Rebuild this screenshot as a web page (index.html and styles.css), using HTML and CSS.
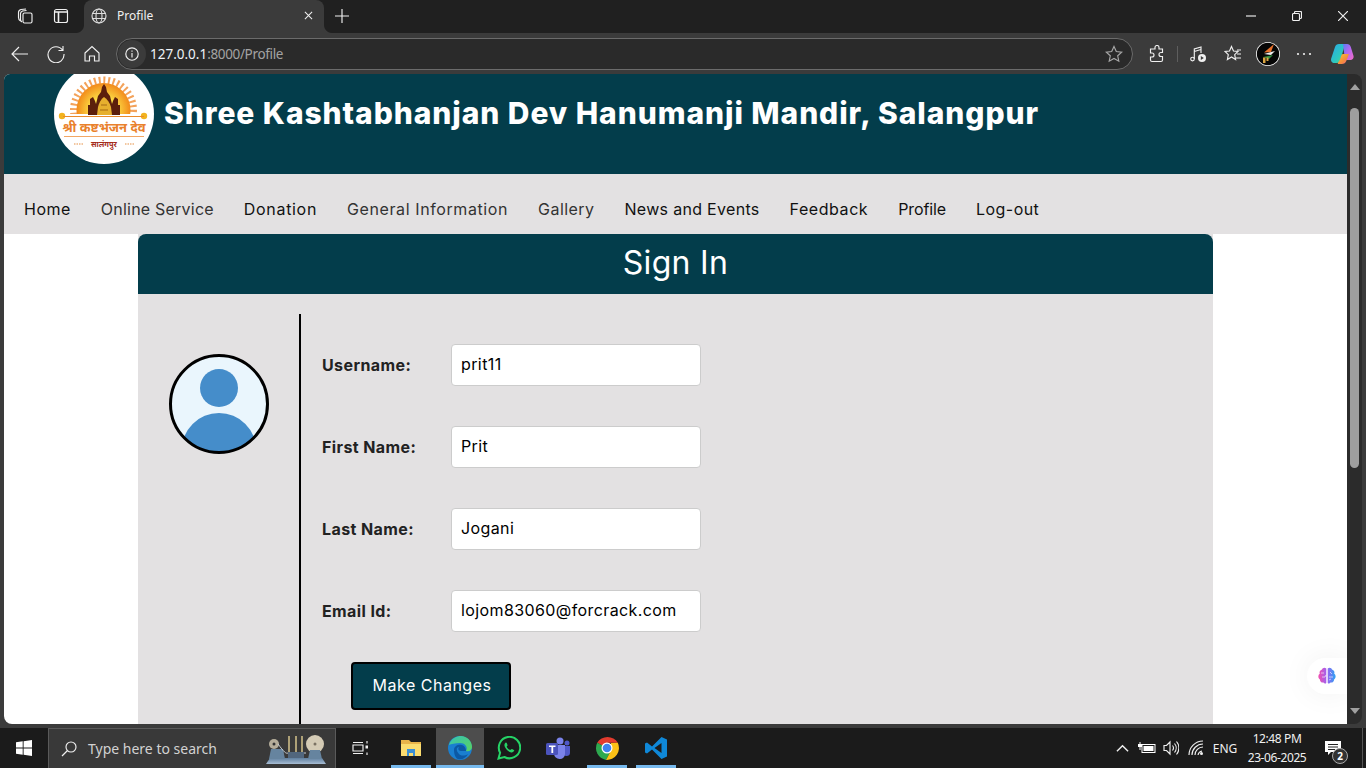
FILE: index.html
```html
<!DOCTYPE html>
<html lang="en">
<head>
<meta charset="utf-8">
<title>Profile</title>
<link rel="stylesheet" href="styles.css">
</head>
<body>
<div class="window">
  <div class="tabstrip">
    <div class="tbtn"><svg class="ic" viewBox="0 0 16 16"><path d="M1.500 4.500c0-1 .8-2.500 2.500-3l5-.5M1.500 4.500v5c0 1.500 1 3 2 3.500M3.500 5.500c0-1 1-2 2-2.500l4-.5M3.500 5.500v6c0 1 .7 2 1.500 2.500"/><rect x="6" y="5" width="9" height="10" rx="1.500"/></svg></div>
    <div class="tbtn tbtn-2"><svg class="ic" viewBox="0 0 16 16"><rect x="1.500" y="1.500" width="13" height="13" rx="2"/><path class="thick" d="M1.500 4h13M5.500 4v10.500"/></svg></div>
    <div class="tab">
      <svg class="ic globe" viewBox="0 0 16 16"><circle cx="8" cy="8" r="7"/><ellipse cx="8" cy="8" rx="3" ry="7"/><path d="M1.500 5.500h13M1.500 10.500h13"/></svg>
      <span class="tab-title">Profile</span>
      <svg class="ic tab-x" viewBox="0 0 10 10"><path d="M1 1l8 8M9 1l-8 8"/></svg>
    </div>
    <div class="tbtn"><svg class="ic plus" viewBox="0 0 14 14"><path d="M7 0v14M0 7h14"/></svg></div>
    <div class="winctl">
      <div class="wbtn"><svg class="ic w10" viewBox="0 0 10 10"><path d="M0 5h10"/></svg></div>
      <div class="wbtn"><svg class="ic w10" viewBox="0 0 10 10"><rect x=".5" y="2.500" width="7" height="7" rx="1"/><path d="M2.500 2.500V1.500a1 1 0 0 1 1-1h5a1 1 0 0 1 1 1v5a1 1 0 0 1-1 1h-1"/></svg></div>
      <div class="wbtn"><svg class="ic w10" viewBox="0 0 10 10"><path d="M0 0l10 10M10 0L0 10"/></svg></div>
    </div>
  </div>

  <div class="toolbar">
    <div class="tbtn"><svg class="ic i18" viewBox="0 0 18 18"><path d="M17 9H1.500M8 2L1 9l7 7"/></svg></div>
    <div class="tbtn"><svg class="ic i18" viewBox="0 0 18 18"><path d="M15.500 5A8 8 0 1 0 17 9M16 1v4.500h-4.500"/></svg></div>
    <div class="tbtn"><svg class="ic i18" viewBox="0 0 18 18"><path d="M2 8l7-6.500L16 8v8h-4.500v-5h-5v5H2z"/></svg></div>
    <div class="address">
      <div class="info"><svg class="ic i14" viewBox="0 0 14 14"><circle cx="7" cy="7" r="6.200"/><path d="M7 6v4.500M7 3.500v1.300"/></svg></div>
      <span class="host">127.0.0.1</span><span class="path">:8000/Profile</span>
      <svg class="ic star" viewBox="0 0 18 18"><path d="M9 1.500l2.300 5 5.400.6-4 3.700 1.100 5.400L9 13.500l-4.800 2.700 1.100-5.400-4-3.700 5.400-.6z"/></svg>
    </div>
    <div class="tbtn tb-ext"><svg class="ic i18" viewBox="0 0 18 18"><path d="M7 2.500a2 2 0 0 1 4 0V4h3.500v3.500H13a2 2 0 0 0 0 4h1.500V15a1.500 1.500 0 0 1-1.500 1.500H4A1.500 1.500 0 0 1 2.500 15v-3H4a2 2 0 0 0 0-4H2.500V4H7z"/></svg></div>
    <div class="sep"></div>
    <div class="tbtn tb-music"><svg class="ic i18" viewBox="0 0 18 18"><circle cx="3.500" cy="14" r="1.800"/><path d="M5.300 14V4l6.700-2v6M5.300 6.500l6.700-2"/><circle class="solid" cx="13" cy="13" r="4"/><path class="cut" d="M11.800 11v4l3-2z"/></svg></div>
    <div class="tbtn tb-fav"><svg class="ic i18" viewBox="0 0 18 18"><path d="M7.500 1.500l2 4.500 4.500.5-3.300 3.200.9 4.800L7.500 12l-4.100 2.500.9-4.800L1 6.500 5.500 6zM13 5h4M13 9h4M12 13h5"/></svg></div>
    <div class="tbtn tb-av"><svg class="avatar-ic" viewBox="0 0 24 24"><circle cx="12" cy="12" r="12" fill="#fff"/><circle cx="12" cy="12" r="11.200" fill="#060606"/><path d="M8 10.500L18 2l-3 8z" fill="#e8702a"/><path d="M8 12l11-3-4 4z" fill="#eee"/><path d="M7 15l10-2-4 4z" fill="#2f8f3b"/><path d="M7 15.500h2.500V21H7zM10.500 15.500h2V19h-2z" fill="#d9a441"/></svg></div>
    <div class="tbtn tb-av"><svg class="ic i18 dots" viewBox="0 0 18 18"><circle cx="3" cy="9" r="1.100"/><circle cx="9" cy="9" r="1.100"/><circle cx="15" cy="9" r="1.100"/></svg></div>
    <div class="tbtn tb-cop"><svg class="copilot" viewBox="0 0 24 24"><defs><linearGradient id="cpa" x1="0" y1="0" x2="1" y2="1"><stop offset="0" stop-color="#2aa7e8"/><stop offset=".6" stop-color="#2dc8c0"/><stop offset="1" stop-color="#5fd86f"/></linearGradient><linearGradient id="cpb" x1="0" y1="0" x2="1" y2="1"><stop offset="0" stop-color="#5a7cf5"/><stop offset=".5" stop-color="#b868f0"/><stop offset="1" stop-color="#f26cc4"/></linearGradient><linearGradient id="cpc" x1="0" y1="0" x2="1" y2="1"><stop offset="0" stop-color="#f7c53a"/><stop offset=".6" stop-color="#f58a3c"/><stop offset="1" stop-color="#ef5fa0"/></linearGradient></defs><path d="M9 2h6l-4.500 16c-.6 2-1.800 3-3.500 3H4.500C2 21 .5 19 1.200 16.500L5 5c.6-2 2-3 4-3z" fill="url(#cpa)"/><path d="M13 2h4c2 0 3.200 1 3.800 3l2.600 8.500c.8 2.500-.6 4.500-3 4.500H15z" fill="url(#cpb)"/><path d="M9 22c-1 0-1.500-.5-1-1.500 1.500-1.500 2.500-4 3-6 .5-2 1-2.500 3-2.500h5c-1 2-1.500 5-3 7.500-1 1.800-2.500 2.500-4 2.500z" fill="url(#cpc)"/></svg></div>
  </div>

  <div class="content-row">
    <div class="viewport">
      <header class="site-header">
        <svg class="logo" viewBox="0 0 100 100">
          <defs>
            <clipPath id="sunclip"><rect x="0" y="0" width="100" height="50"/></clipPath>
            <radialGradient id="sung"><stop offset=".45" stop-color="#fde047"/><stop offset="1" stop-color="#f28a1a"/></radialGradient>
          </defs>
          <circle cx="50" cy="50" r="50" fill="#fff"/>
          <g clip-path="url(#sunclip)">
            <circle cx="49.500" cy="46" r="30" fill="none" stroke="#f3a25a" stroke-width="7" stroke-dasharray="2 2.700"/>
            <circle cx="49.500" cy="46" r="27" fill="url(#sung)"/>
          </g>
          <path d="M34 51v-10h2v-6l3-2 2 4 1 3 2-8 3-4 1-5 2-3 2 3 1 5 3 4 2 8 1-3 2-4 3 2v6h2v10z" fill="#5c1f0c"/>
          <path d="M50 33c3 2 6 6 7 10l1 8H43l1-8c1-4 3-8 6-10z" fill="#e6b02e"/>
          <path d="M47 41h6M46 46h8" stroke="#a56a14" stroke-width="1"/>
          <circle cx="8" cy="52" r="3.200" fill="#f2b31f"/><circle cx="90" cy="52" r="3.200" fill="#f2b31f"/>
          <path d="M9 52.500h81" stroke="#ea8a2a" stroke-width="1"/>
          <text class="logo-main" x="50" y="68" text-anchor="middle">श्री कष्टभंजन देव</text>
          <path d="M10 72.500h80" stroke="#f2a765" stroke-width="1.200"/>
          <path d="M20 80h9M71 80h9" stroke="#f2c7a0" stroke-width="2" stroke-dasharray="1.500 1"/>
          <text class="logo-sub" x="50" y="83" text-anchor="middle">सालंगपुर</text>
        </svg>
        <h1 class="site-title">Shree Kashtabhanjan Dev Hanumanji Mandir, Salangpur</h1>
      </header>
      <nav class="site-nav">
        <a>Home</a><a class="soft">Online Service</a><a>Donation</a><a class="soft">General Information</a><a class="soft">Gallery</a><a>News and Events</a><a>Feedback</a><a>Profile</a><a>Log-out</a>
      </nav>
      <main class="card">
        <h2 class="card-head">Sign In</h2>
        <div class="card-body">
          <div class="side">
            <svg class="avatar" viewBox="0 0 100 100">
              <defs><clipPath id="avclip"><circle cx="50" cy="50" r="48"/></clipPath></defs>
              <circle cx="50" cy="50" r="48" fill="#eaf6fd"/>
              <circle cx="50" cy="34" r="19" fill="#458dca"/>
              <circle cx="50" cy="96.300" r="37.300" fill="#458dca" clip-path="url(#avclip)"/>
              <circle cx="50" cy="50" r="48.500" fill="none" stroke="#000" stroke-width="3"/>
            </svg>
          </div>
          <form class="form">
            <div class="row"><label class="lbl">Username:</label><input class="field" value="prit11"></div>
            <div class="row"><label class="lbl">First Name:</label><input class="field" value="Prit"></div>
            <div class="row"><label class="lbl">Last Name:</label><input class="field" value="Jogani"></div>
            <div class="row"><label class="lbl">Email Id:</label><input class="field" value="lojom83060@forcrack.com"></div>
            <button class="submit" type="button">Make Changes</button>
          </form>
        </div>
      </main>
      <div class="float-pill">
        <svg class="brain" viewBox="0 0 20 20"><defs><linearGradient id="brg" x1="0" y1="0" x2="1" y2="0"><stop offset="0" stop-color="#f24fb0"/><stop offset=".5" stop-color="#9a62f2"/><stop offset="1" stop-color="#2aa4f2"/></linearGradient></defs><path d="M9.300 2.500C7.500 1 5.500 2 5 3.500 3 4 2 6 2.800 7.500 1 9 .8 12 2.800 13.200 2.800 15.500 4.800 17 6.500 16.500c.8 1.500 2.500 1.300 2.800.2zM10.700 2.500C12.500 1 14.500 2 15 3.500c2 .5 3 2.500 2.200 4 1.800 1.500 2 4.500 0 5.700 0 2.300-2 3.800-3.700 3.300-.8 1.500-2.500 1.300-2.800.2z" fill="url(#brg)"/><path d="M4 7h3M5 11h3l1-2M13 6l2 2M12 11h4M12 14l2-1" stroke="#fff" stroke-width=".6" fill="none"/></svg>
      </div>
    </div>
    <div class="scrollbar">
      <div class="arrow-up"></div>
      <div class="thumb"></div>
      <div class="arrow-down"></div>
    </div>
  </div>

  <div class="taskbar">
    <div class="start"><svg class="win" viewBox="0 0 16 16"><path d="M0 2.200L6.700 1.300V7.500H0zM7.600 1.200L16 0V7.500H7.600zM0 8.500H6.700V14.700L0 13.800zM7.600 8.500H16V16L7.600 14.800z"/></svg></div>
    <div class="search">
      <svg class="ic mag" viewBox="0 0 16 16"><circle cx="10" cy="6" r="5"/><path d="M6.500 9.500L1 15"/></svg>
      <span class="search-text">Type here to search</span>
      <svg class="machine" viewBox="0 0 60 32"><defs><linearGradient id="mbase" x1="0" y1="0" x2="0" y2="1"><stop offset="0" stop-color="#5f7f9f"/><stop offset="1" stop-color="#a8bdd3"/></linearGradient></defs><path d="M0 31l4-6h52l4 6z" fill="url(#mbase)"/><path d="M5 16h12l2 10H3z" fill="#66849f"/><circle cx="8" cy="11" r="5" fill="#b5ad9a"/><circle cx="8" cy="11" r="1.500" fill="#333"/><path d="M12 11c6 8 8 10 10 9h18" stroke="#c7cdd3" fill="none"/><path d="M23 3v16M30 3v16M36 3v16" stroke="#d5c48c" stroke-width="1.500"/><rect x="22" y="19" width="16" height="6" fill="#51667d"/><circle cx="49" cy="11" r="9" fill="#d4cbb5"/><circle cx="49" cy="11" r="1.500" fill="#7a7262"/><path d="M44 17h10l2 9H42z" fill="#66849f"/></svg>
    </div>
    <div class="tile"><svg class="ic taskview" viewBox="0 0 16 16"><path d="M1 2.500h10M1 13.500h10M1 5h10v6H1zM15 1v2.500M15 12.500V15"/><rect class="solid" x="13.500" y="5.500" width="3" height="3"/></svg></div>
    <div class="apps">
      <div class="tile app run-40">
        <svg class="app-ic" viewBox="0 0 24 24"><path d="M2 4h8l2 2h10v14H2z" fill="#e9b44a"/><path d="M2 8h20v12H2z" fill="#fbdc6f"/><path d="M8 13h8v7h-2v-3h-4v3H8z" fill="#3b8fd4"/></svg>
      </div>
      <div class="tile app active">
        <svg class="app-ic" viewBox="0 0 24 24"><defs><linearGradient id="edg" x1="0" y1="0" x2="1" y2="1"><stop offset="0" stop-color="#36c2b4"/><stop offset="1" stop-color="#5ad35f"/></linearGradient></defs><circle cx="12" cy="12" r="12" fill="#1a7fd0"/><path d="M1 9C3 2 9 0 13 0c6 0 11 5 11 11 0 3-3 5-6 4 2-3 0-8-6-8-5 0-9 1-11 2z" fill="url(#edg)"/><path d="M6 14c0-4 4-6 8-5 3 1 4 4 4 6h-5c-3 0-3-3-2-4-3 0-3 4 0 7 2 2 6 2 9 0-2 4-6 6-10 5-3-1-4-6-4-9z" fill="#0c59a4"/></svg>
      </div>
      <div class="tile app">
        <svg class="app-ic" viewBox="0 0 24 24"><path d="M1.500 22.500l1.600-5.800A10.700 10.700 0 1 1 7.400 21z" fill="none" stroke="#25d366" stroke-width="2"/><path d="M8.500 6.800c-1.300.8-1.500 2.800-.3 4.800 1.300 2.300 3 3.800 5.300 4.600 1.800.6 3.200-.3 3.700-1.400.2-.6-.1-.9-2.300-1.900-.6-.2-1.100.9-1.700 1.100-1.300-.3-3-1.900-3.500-3.300.3-.7 1.100-1 .8-1.700-.9-2.400-1.200-2.800-2-2.200z" fill="#25d366"/></svg>
      </div>
      <div class="tile app">
        <svg class="app-ic" viewBox="0 0 24 24"><circle cx="14" cy="5" r="3.500" fill="#7b83eb"/><circle cx="21" cy="7" r="2.500" fill="#5059c9"/><path d="M17 10h7v7c0 2-1.500 3-3.500 3-1 0-2-.5-3-1z" fill="#5059c9"/><path d="M8 9h11v9a5 5 0 0 1-5.500 5A5.500 5.500 0 0 1 8 18z" fill="#7b83eb"/><rect x="0" y="7" width="12" height="12" rx="1.500" fill="#4b53bc"/><path d="M3 9.500h6.500v1.600H7.200V17H5.400v-5.900H3z" fill="#fff"/></svg>
      </div>
      <div class="tile app run-40">
        <svg class="app-ic" viewBox="0 0 24 24"><path d="M12 12L2.200 6.800A12 12 0 0 1 22.800 6.800H12z" fill="#e33b2e"/><path d="M2.200 6.800A12 12 0 0 0 11 23.900L16 14.500 12 12z" fill="#2da94f"/><path d="M22.800 6.800A12 12 0 0 1 11 23.900l5-9.400L16 7z" fill="#fbc116"/><circle cx="12" cy="12" r="5.500" fill="#fff"/><circle cx="12" cy="12" r="4.300" fill="#3f83f0"/></svg>
      </div>
      <div class="tile app run-40">
        <svg class="app-ic" viewBox="0 0 24 24"><path d="M17.500 1L8 10.500 3 6.500 1 7.500v9l2 1 5-4 9.500 9.500 5.500-2.500V3.500zM17.500 7v10L10.500 12z" fill="#0f88d8"/></svg>
      </div>
    </div>
    <div class="tray">
      <div class="tray-i w24"><svg class="ic t14" viewBox="0 0 14 14"><path d="M1 10l6-6 6 6"/></svg></div>
      <div class="tray-i w25"><svg class="batt" viewBox="0 0 18 14"><rect x="4" y="3.500" width="13" height="8" fill="none" stroke="#fff"/><rect x="5.500" y="5" width="10" height="5" fill="#fff"/><path d="M0 3h4v3H0z" fill="#fff"/><path d="M2 1v2M2 6v3" stroke="#fff"/></svg></div>
      <div class="tray-i w24"><svg class="ic t16" viewBox="0 0 16 16"><path d="M1 5.500h2.500L7 2v12l-3.500-3.500H1zM9.500 5.500a4 4 0 0 1 0 5M11.500 3.500a7 7 0 0 1 0 9M13.500 1.500a10 10 0 0 1 0 13"/></svg></div>
      <div class="tray-i w25"><svg class="ic t16" viewBox="0 0 16 16"><path d="M1 15A14 14 0 0 1 15 1M4 15A11 11 0 0 1 15 4M7 15a8 8 0 0 1 8-8M10 15a5 5 0 0 1 4-4"/><circle class="solid" cx="13.500" cy="13.500" r="1.500"/></svg></div>
      <div class="tray-i w34 tray-text">ENG</div>
      <div class="clock"><span>12:48 PM</span><span>23-06-2025</span></div>
      <div class="notif">
        <svg class="note" viewBox="0 0 16 16"><path d="M0 1h16v11H6l-3 3v-3H0z" fill="#fff"/><path d="M3 4.500h10M3 7h10M3 9.500h7" stroke="#222"/></svg>
        <span class="badge">2</span>
      </div>
      <div class="peek"></div>
    </div>
  </div>
</div>
</body>
</html>
```

FILE: styles.css
```css
* { box-sizing: border-box; }
html, body { margin: 0; height: 100%; overflow: hidden; background: #3b3b3b; }
body { font-family: "Inter", "Noto Sans", sans-serif; }
.window { width: 1366px; height: 768px; display: flex; flex-direction: column; }

.ic { fill: none; stroke: #f0f0f0; stroke-width: 1.150; display: block; }
.ic .solid { fill: #f0f0f0; stroke: none; }
.ic .cut { fill: #3b3b3b; stroke: none; }
.ic .thick { stroke-width: 1.600; }

.tabstrip { height: 33px; background: #202020; display: flex; padding: 0 0 0 7px; flex: none; }
.tbtn { width: 36px; height: 100%; display: flex; align-items: center; justify-content: center; flex: none; }
.tabstrip > .tbtn { padding-bottom: 2px; }
.tbtn .ic { width: 16px; height: 16px; }
.tbtn-2 { width: 35px; }
.tbtn .plus { width: 14px; height: 14px; }
.tab { width: 240px; margin-left: 6px; background: #3b3b3b; border-radius: 8px 8px 0 0; display: flex; align-items: center; padding: 0 0 2px 7px; color: #f0f0f0; flex: none; position: relative; }
.tab::before, .tab::after { content: ""; position: absolute; bottom: 0; width: 8px; height: 8px; }
.tab::before { left: -8px; background: radial-gradient(circle at 0 0, #202020 7.5px, #3b3b3b 8.5px); }
.tab::after { right: -8px; background: radial-gradient(circle at 100% 0, #202020 7.5px, #3b3b3b 8.5px); }
.tab .globe { width: 16px; height: 16px; stroke: #ddd; }
.tab-title { font: 12px "Noto Sans", sans-serif; margin-left: 10px; }
.tab .tab-x { width: 9px; height: 9px; margin-left: auto; margin-right: 11px; }
.winctl { margin-left: auto; display: flex; padding-bottom: 2px; }
.wbtn { width: 46px; display: flex; align-items: center; justify-content: center; }
.w10 { width: 10px; height: 10px; }

.toolbar { height: 41px; background: #3b3b3b; display: flex; align-items: center; padding-left: 2px; flex: none; }
.toolbar .i18, .tbtn .i18 { width: 18px; height: 18px; }
.address { width: 1017px; height: 32px; margin-left: 6px; background: #2a2a2a; border: 1px solid #6b6b6b; border-radius: 16px; display: flex; align-items: center; font: 13.500px "Noto Sans", sans-serif; flex: none; }
.info { width: 28px; height: 28px; margin-left: 1px; margin-right: 4px; border-radius: 50%; background: #3b3b3b; display: flex; align-items: center; justify-content: center; }
.i14 { width: 14px; height: 14px; }
.host { color: #eef3f7; }
.path { color: #a3a3a3; letter-spacing: -.35px; }
.star { width: 18px; height: 18px; margin-left: auto; margin-right: 9px; stroke: #a8a8a8; }
.tb-ext { margin-left: 6px; }
.sep { width: 1px; height: 16px; background: #5e5e5e; margin: 0 2px 0 2px; flex: none; }
.tb-music { width: 35px; }
.tb-fav { width: 35px; }
.tb-av { width: 36px; }
.tb-cop { width: 40px; }
.avatar-ic { width: 24px; height: 24px; display: block; }
.dots { fill: #f0f0f0; stroke: none; }
.copilot { width: 24px; height: 24px; display: block; }

.content-row { height: 650px; display: flex; padding: 0 4px; flex: none; }
.viewport { width: 1343px; height: 650px; overflow: hidden; background: #fff; position: relative; border-radius: 6px 0 0 8px; flex: none; }
.scrollbar { width: 15px; background: #2b2b2b; border-radius: 0 8px 8px 0; display: flex; flex-direction: column; align-items: center; flex: none; }
.arrow-up { width: 0; height: 0; margin-top: 10px; border: 5px solid transparent; border-top: 0; border-bottom: 6px solid #a0a0a0; }
.thumb { width: 9px; height: 360px; margin-top: 18px; border-radius: 5px; background: #9e9e9e; }
.arrow-down { width: 0; height: 0; margin-top: auto; margin-bottom: 10px; border: 5px solid transparent; border-bottom: 0; border-top: 6px solid #a0a0a0; }

.site-header { height: 110px; margin-top: -10px; background: #033d4b; display: flex; align-items: flex-start; padding-left: 50px; }
.logo { width: 100px; height: 100px; flex: none; display: block; }
.logo-main { font: 700 13px "Noto Sans", sans-serif; fill: #e9812c; }
.logo-sub { font: 700 7.500px "Noto Sans", sans-serif; fill: #a52a1a; }
.site-title { margin: 27px 0 0 10px; font-size: 30px; line-height: 44px; font-weight: 800; color: #fff; white-space: nowrap; letter-spacing: .93px; }

.site-nav { height: 60px; background: #e3e1e2; display: flex; align-items: center; gap: 30px; padding: 9px 0 0 20px; font-size: 16px; letter-spacing: .44px; color: #111; }
.site-nav .soft { color: #333; }
.site-nav a:nth-child(1) { letter-spacing: .5px; }
.site-nav a:nth-child(2) { letter-spacing: .22px; }
.site-nav a:nth-child(3) { letter-spacing: .68px; }
.site-nav a:nth-child(4) { letter-spacing: .6px; }
.site-nav a:nth-child(6) { letter-spacing: .31px; }
.site-nav a:nth-child(7) { letter-spacing: .56px; }
.site-nav a:nth-child(8) { letter-spacing: -.1px; }

.card { width: 1075px; margin: 0 auto; background: #e3e1e2; }
.card-head { height: 60px; margin: 0; background: #033d4b; color: #fff; border-radius: 8px 8px 0 0; text-align: center; font-size: 32px; font-weight: 400; line-height: 58px; letter-spacing: .3px; }
.card-body { display: flex; padding: 20px 0 0; }
.side { width: 161px; padding: 40px 0 0 31px; flex: none; }
.avatar { width: 100px; height: 100px; display: block; }
.form { border-left: 2px solid #000; padding: 30px 0 40px 21px; }
.row { display: flex; align-items: center; height: 42px; margin-bottom: 40px; }
.lbl { width: 129px; font-size: 16px; font-weight: 700; color: #222; letter-spacing: .4px; flex: none; }
.field { width: 250px; height: 42px; background: #fff; border: 1px solid #ccc; border-radius: 4px; padding: 0 9px 2px; font: 16px "Inter", sans-serif; letter-spacing: .4px; color: #000; outline: none; }
.submit { display: block; width: 160px; height: 48px; margin: -10px 0 0 29px; padding: 0 0 2px 2px; background: #033d4b; border: 2px solid #000; border-radius: 4px; color: #fff; font: 16px "Inter", sans-serif; letter-spacing: .5px; }

.float-pill { position: absolute; right: 0; top: 584px; width: 40px; height: 36px; background: #fff; border-radius: 18px 0 0 18px; box-shadow: 0 0 30px rgba(0,0,0,.06); display: flex; align-items: center; padding-left: 10px; }
.brain { width: 20px; height: 20px; display: block; }

.taskbar { height: 40px; margin-top: 4px; background: #1b1b1b; display: flex; flex: none; }
.start { width: 48px; display: flex; align-items: center; justify-content: center; flex: none; }
.win { width: 16px; height: 16px; fill: #fff; display: block; }
.search { width: 288px; background: #393939; border: 1px solid #5a5a5a; border-bottom: 0; display: flex; align-items: center; padding-left: 12px; flex: none; }
.mag { width: 16px; height: 16px; }
.search-text { font: 14px "Noto Sans", sans-serif; margin-left: 11px; color: #d2d2d2; }
.machine { width: 60px; height: 32px; margin-left: auto; margin-right: 9px; display: block; }
.tile { width: 48px; height: 40px; display: flex; align-items: center; justify-content: center; flex: none; position: relative; }
.taskview { width: 16px; height: 16px; }
.apps { display: flex; margin-left: 3px; gap: 1px; }
.app-ic { width: 24px; height: 24px; display: block; }
.active { background: #4d4d4d; border-bottom: 3px solid #76b9ed; }
.active .app-ic { margin-top: 3px; }
.run-40::after { content: ""; position: absolute; left: 4px; right: 4px; bottom: 0; height: 3px; background: #76b9ed; }
.tray { margin-left: auto; display: flex; align-items: stretch; color: #f0f0f0; }
.tray-i { display: flex; align-items: center; justify-content: center; flex: none; }
.w24 { width: 24px; }
.w25 { width: 25px; }
.w34 { width: 34px; }
.t14 { width: 13px; height: 13px; }
.t14 path { stroke-width: 1.500; }
.t16 { width: 16px; height: 16px; }
.batt { width: 18px; height: 14px; display: block; }
.tray-text { font: 12px "Noto Sans", sans-serif; }
.clock { width: 68px; display: flex; flex-direction: column; align-items: center; justify-content: center; padding-left: 2px; font: 12px/19px "Noto Sans", sans-serif; letter-spacing: -.4px; white-space: nowrap; }
.notif { width: 52px; position: relative; display: flex; align-items: center; justify-content: center; }
.note { width: 16px; height: 16px; display: block; margin-right: 6px; }
.badge { position: absolute; left: 22px; top: 20px; width: 16px; height: 16px; border-radius: 50%; background: #333; border: 1px solid #aaa; font: 700 10px/14px "Noto Sans", sans-serif; text-align: center; color: #fff; }
.peek { width: 4px; border-left: 1px solid #555; }
```
